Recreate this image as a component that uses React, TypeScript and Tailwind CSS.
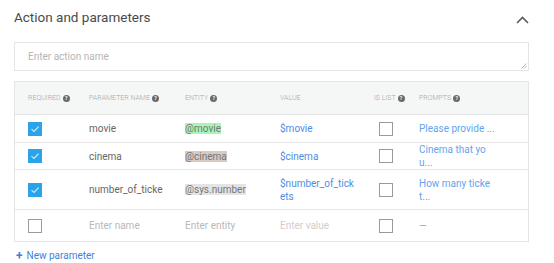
import React from "react";

type Row = {
  required: boolean;
  name: string;
  entity: string;
  entityClass: string;
  value: React.ReactNode;
  prompt: React.ReactNode;
  heightClass: string;
};

const COLS = "grid grid-cols-[60px_96px_95px_94px_45px_125px]";

function HelpDot() {
  return (
    <span className="ml-[2px] inline-flex h-[7px] w-[7px] shrink-0 items-center justify-center rounded-full bg-[#6a6a6a] text-[5px] font-bold leading-none text-white">
      ?
    </span>
  );
}

function Checkbox({ checked }: { checked: boolean }) {
  if (checked) {
    return (
      <span className="flex h-[14px] w-[14px] items-center justify-center bg-[#2aa3ea]">
        <svg width="10" height="10" viewBox="0 0 10 10" fill="none">
          <path d="M1.5 5.2 L4 7.4 L8.6 2.6" stroke="#cfeeff" strokeWidth="1.1" />
        </svg>
      </span>
    );
  }
  return <span className="block h-[14px] w-[14px] border border-[#9a9a9a] bg-white" />;
}

const ROWS: Row[] = [
  {
    required: true,
    name: "movie",
    entity: "@movie",
    entityClass: "bg-[#a8f5b6]",
    value: "$movie",
    prompt: "Please provide ...",
    heightClass: "h-[28px]",
  },
  {
    required: true,
    name: "cinema",
    entity: "@cinema",
    entityClass: "bg-[#d8c9c5]",
    value: "$cinema",
    prompt: (
      <>
        Cinema that yo
        <br />
        u...
      </>
    ),
    heightClass: "h-[27px]",
  },
  {
    required: true,
    name: "number_of_ticke",
    entity: "@sys.number",
    entityClass: "bg-[#e4e4e4]",
    value: (
      <>
        $number_of_tick
        <br />
        ets
      </>
    ),
    prompt: (
      <>
        How many ticke
        <br />
        t...
      </>
    ),
    heightClass: "h-[40px]",
  },
];

export default function App() {
  return (
    <div className="h-[263px] w-[554px] bg-white font-['Roboto',sans-serif]">
      <div className="flex items-center justify-between pl-[14px] pr-[25px] pt-[8px]">
        <h2 className="text-[13.5px] leading-[18px] text-[#4a4a4a]">Action and parameters</h2>
        <svg width="13" height="8" viewBox="0 0 13 8" fill="none" className="mt-[6px]">
          <path d="M1 7 L6.5 1.5 L12 7" stroke="#5a5a5a" strokeWidth="1.6" />
        </svg>
      </div>

      <div className="relative ml-[14px] mt-[16px] h-[29px] w-[515px] border border-[#e4e4e4]">
        <span className="absolute left-[13px] top-[6px] text-[10px] text-[#b5b5b5]">Enter action name</span>
        <svg width="6" height="6" viewBox="0 0 6 6" className="absolute bottom-[1px] right-[1px]">
          <path d="M0.5 5.5 L5.5 0.5 M3 5.5 L5.5 3" stroke="#999" strokeWidth="0.7" />
        </svg>
      </div>

      <div className="ml-[14px] mt-[10px] w-[515px] border border-[#e4e4e4]">
        <div className={`${COLS} h-[33px] items-center whitespace-nowrap border-b border-[#e4e4e4] bg-[#f5f6f6] text-[7px] font-light uppercase text-[#a8a8a8]`}>
          <div className="flex items-center pl-[13px]">Required<HelpDot /></div>
          <div className="flex items-center pl-[14px]">Parameter name<HelpDot /></div>
          <div className="flex items-center pl-[14px]">Entity<HelpDot /></div>
          <div className="pl-[14px]">Value</div>
          <div className="flex items-center pl-[14px]">Is list<HelpDot /></div>
          <div className="flex items-center pl-[14px]">Prompts<HelpDot /></div>
        </div>

        {ROWS.map((row) => (
          <div
            key={row.name}
            className={`${COLS} ${row.heightClass} items-center border-b border-[#e8e8e8] text-[10px] leading-[13px]`}
          >
            <div className="pl-[13px]">
              <Checkbox checked={row.required} />
            </div>
            <div className="overflow-hidden whitespace-nowrap pl-[14px] text-[#666]">{row.name}</div>
            <div className="pl-[14px]">
              <span className={`${row.entityClass} text-[#777]`}>{row.entity}</span>
            </div>
            <div className="pl-[14px] text-[#4d8de6]">{row.value}</div>
            <div className="pl-[19px]">
              <Checkbox checked={false} />
            </div>
            <div className="pl-[14px] text-[#64a3ee]">{row.prompt}</div>
          </div>
        ))}

        <div className={`${COLS} h-[31px] items-center text-[10px] leading-[13px]`}>
          <div className="pl-[13px]">
            <Checkbox checked={false} />
          </div>
          <div className="pl-[14px] text-[#b8b8b8]">Enter name</div>
          <div className="pl-[14px] text-[#b8b8b8]">Enter entity</div>
          <div className="pl-[14px] text-[#d4cccc]">Enter value</div>
          <div className="pl-[19px]">
            <Checkbox checked={false} />
          </div>
          <div className="pl-[14px] text-[#aaa]">—</div>
        </div>
      </div>

      <div className="ml-[16px] mt-[6px] flex items-center gap-[4px] text-[10px] text-[#3f7fdc]">
        <span className="text-[12px] font-bold leading-none">+</span>
        <span>New parameter</span>
      </div>
    </div>
  );
}
